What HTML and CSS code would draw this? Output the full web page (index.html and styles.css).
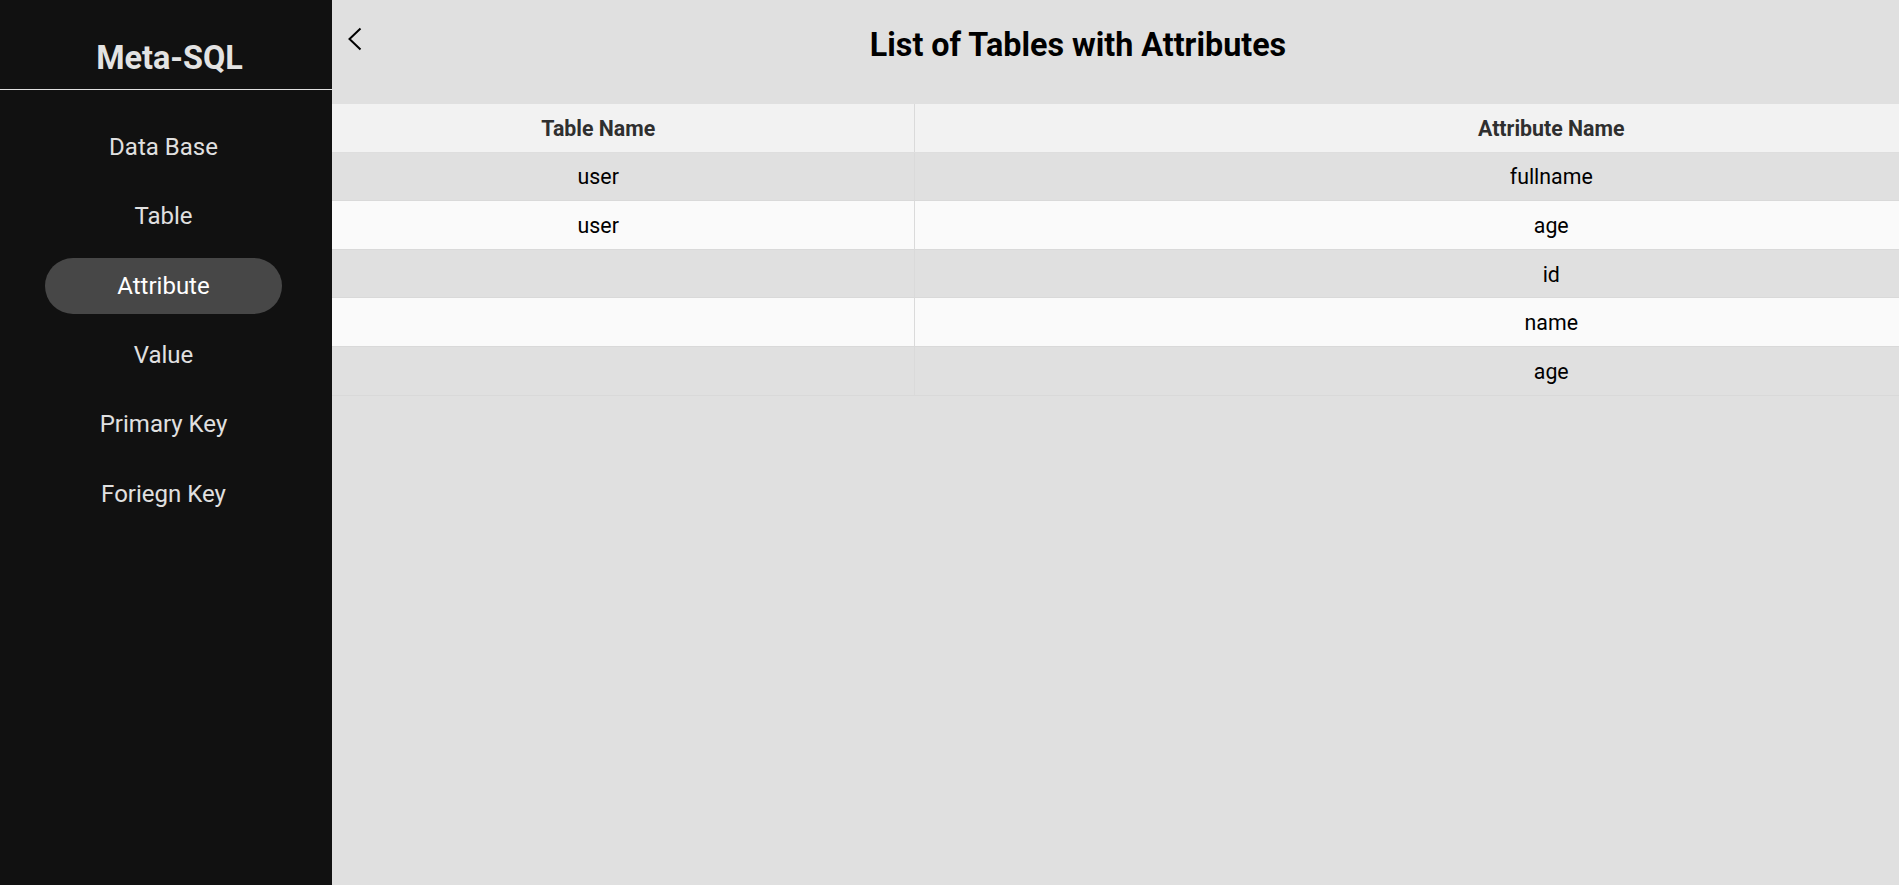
FILE: index.html
```html
<!DOCTYPE html>
<html lang="en">
<head>
<meta charset="utf-8">
<title>Meta-SQL</title>
<link rel="stylesheet" href="styles.css">
</head>
<body>
<div class="app">
  <aside class="sidebar">
    <div class="brand">Meta-SQL</div>
    <nav class="nav">
      <a class="nav-item" href="#">Data Base</a>
      <a class="nav-item" href="#">Table</a>
      <a class="nav-item active" href="#">Attribute</a>
      <a class="nav-item" href="#">Value</a>
      <a class="nav-item" href="#">Primary Key</a>
      <a class="nav-item" href="#">Foriegn Key</a>
    </nav>
  </aside>
  <main class="main">
    <header class="page-header">
      <button class="back" aria-label="Back">
        <svg width="16" height="24" viewBox="0 0 16 24"><path d="M13.5 1.5 L2.5 12 L13.5 22.5" fill="none" stroke="#000" stroke-width="2"/></svg>
      </button>
      <h1 class="title">List of Tables with Attributes</h1>
    </header>
    <table class="grid">
      <colgroup><col class="c1"><col class="c2"></colgroup>
      <thead>
        <tr><th class="cell-a">Table Name</th><th class="cell-b">Attribute Name</th></tr>
      </thead>
      <tbody>
        <tr><td class="cell-a">user</td><td class="cell-b">fullname</td></tr>
        <tr><td class="cell-a">user</td><td class="cell-b">age</td></tr>
        <tr><td class="cell-a"></td><td class="cell-b">id</td></tr>
        <tr><td class="cell-a"></td><td class="cell-b">name</td></tr>
        <tr><td class="cell-a"></td><td class="cell-b">age</td></tr>
      </tbody>
    </table>
  </main>
</div>
</body>
</html>
```
FILE: styles.css
```css
* { box-sizing: border-box; }
html, body { margin: 0; padding: 0; height: 100%; }
body {
  font-family: Roboto, "Liberation Sans", sans-serif;
  background: #e0e0e0;
  overflow: hidden;
}
.app {
  display: flex;
  height: 885px;
}
.sidebar {
  width: 332px;
  flex: none;
  background: #111111;
  color: #e0e0e0;
}
.brand {
  font-size: 32.4px;
  font-weight: 700;
  text-align: center;
  height: 90px;
  padding: 38.5px 0 0 7px;
  border-bottom: 1px solid #e0e0e0;
  color: #e3e3e3;
}
.nav {
  display: flex;
  flex-direction: column;
  padding: 22.3px 50px 0 45px;
}
.nav-item {
  display: flex;
  align-items: center;
  justify-content: center;
  height: 56px;
  margin: 6.67px 0;
  font-size: 24px;
  color: #e0e0e0;
  text-decoration: none;
  border-radius: 28px;
}
.nav-item.active {
  background: #474747;
  color: #ffffff;
}
.main {
  flex: 1;
  min-width: 0;
  background: #e0e0e0;
}
.page-header {
  display: flex;
  align-items: flex-start;
  padding: 25.5px 106px 0 15px;
  height: 104px;
}
.back {
  border: 0;
  background: none;
  padding: 0;
  margin-top: 1.5px;
  width: 16px;
  height: 24px;
  cursor: pointer;
}
.back svg { display: block; }
.title {
  flex: 1;
  margin: 0;
  text-align: center;
  font-size: 32.3px;
  font-weight: 700;
  color: #000;
  line-height: normal;
}
.grid {
  width: 100%;
  border-collapse: collapse;
  table-layout: fixed;
  font-size: 21.33px;
}
.grid col.c1 { width: 582px; }
.grid th, .grid td {
  padding: 11.8px 0 10.8px;
  text-align: center;
  line-height: normal;
  border-bottom: 1px solid #d9d9d9;
  color: #000;
  font-weight: 400;
}
.grid th {
  background: #f2f2f2;
  color: #2f2f2f;
  font-weight: 700;
  border-bottom-color: #dedede;
}
.grid .cell-a {
  padding-right: 49px;
  border-right: 1px solid #dadada;
}
.grid .cell-b {
  padding-left: 289px;
}
.grid tbody tr:nth-child(even) td { background: #fafafa; }
```
